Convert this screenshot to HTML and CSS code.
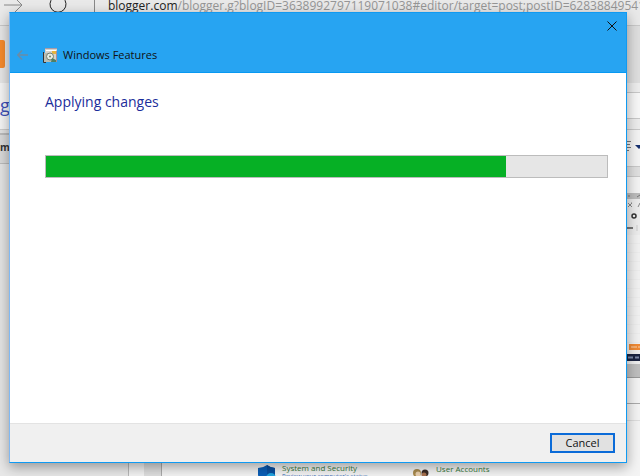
FILE: index.html
```html
<!DOCTYPE html>
<html lang="en">
<head>
<meta charset="utf-8">
<title>Windows Features</title>
<link rel="stylesheet" href="styles.css">
</head>
<body>
<div class="desktop">
  <header class="address-bar">
    <svg class="nav-icon" viewBox="0 0 20 18"><path d="M0 9H17M10 1L18 9L10 17"/></svg>
    <svg class="nav-icon reload" viewBox="0 0 20 18"><path d="M14 2A8 8 0 1 1 4 2"/></svg>
    <span class="divider"></span>
    <span class="url"><b>blogger.com</b>/blogger.g?blogID=3638992797119071038#editor/target=post;postID=6283884954153</span>
  </header>

  <main class="behind">
    <div class="strip left">
      <div class="band compose"><span class="orange"></span></div>
      <div class="band blog-title">g</div>
      <div class="band tools">m</div>
      <div class="band rest"></div>
    </div>
    <div class="strip right">
      <div class="band top"></div>
      <div class="band pale"></div>
      <div class="band field"></div>
      <div class="band gap"></div>
      <div class="band format">
        <svg viewBox="0 0 14 12"><path d="M0 1.500H5M0 4.500H4M0 7.500H5M0 10.500H3" stroke="#777"/><path d="M9 5H17L13 9Z" fill="#17316f"/></svg>
      </div>
      <div class="band ruler"></div>
      <div class="band pale-two"></div>
      <div class="band thumb-bar"><svg viewBox="0 0 14 6"><path d="M2 3H4M11 4L14 2" stroke="#777"/></svg></div>
      <div class="band thumb-tools">
        <svg viewBox="0 0 14 36"><path d="M2 4L6 8M6 4L2 8M5 4H6M12 8L14 4" stroke="#888" fill="none"/><circle cx="8" cy="17" r="2" fill="none" stroke="#333" stroke-width="1.5"/><path d="M0 29H7" stroke="#777" stroke-width="2"/><path d="M11 26V32" stroke="#ccc"/></svg>
      </div>
      <div class="band thumb-page"></div>
      <div class="band thumb-orange"><svg viewBox="0 0 11 6"><path d="M2 3H8M9 3H11" stroke="#fbd3ad"/></svg></div>
      <div class="band thumb-navy"><svg viewBox="0 0 14 7"><path d="M2 3.500H7M9 3.500H13" stroke="#7c8aa8" stroke-width="2"/></svg></div>
      <div class="band thumb-foot"></div>
      <div class="band page-end"></div>
      <div class="band page-line"></div>
      <div class="band page-rest"></div>
    </div>
  </main>

  <footer class="panel">
    <div class="panel-side"></div>
    <div class="panel-gap"></div>
    <div class="panel-edge"></div>
    <div class="panel-body">
      <div class="item">
        <svg class="shield" viewBox="0 0 20 18"><path d="M1 3Q6 3 10 0Q14 3 18 3V10Q17 15 10 19Q2 15 1 10Z" fill="#0b5fb8"/><path d="M10 0Q14 3 18 3V10H10Z" fill="#0a4f9f"/><circle cx="14" cy="13" r="5" fill="#23a5e0"/></svg>
        <div><div class="item-name">System and Security</div><div class="item-link">Review your computer's status</div></div>
      </div>
      <div class="item accounts">
        <svg class="people" viewBox="0 0 16 16"><circle cx="4" cy="5" r="4" fill="#a98b4e"/><circle cx="5" cy="6" r="2.5" fill="#ead0ad"/><circle cx="12" cy="5" r="3.5" fill="#3a2b25"/><circle cx="11" cy="7" r="2.5" fill="#a8714e"/><path d="M0 16Q1 10 5 10Q8 10 8 16Z" fill="#7fae8c"/><path d="M8 16Q9 10 12 10Q15 10 16 16Z" fill="#55799b"/></svg>
        <div class="item-name">User Accounts</div>
      </div>
    </div>
  </footer>

  <section class="dialog" role="dialog" aria-labelledby="dialog-title">
    <header class="dialog-head">
      <div class="close-row">
        <button class="close" aria-label="Close"><svg viewBox="0 0 10 10"><path d="M0.500 0.500L9.500 9.500M9.500 0.500L0.500 9.500"/></svg></button>
      </div>
      <div class="title-row">
        <button class="back" aria-label="Back" disabled><svg viewBox="0 0 12 10"><path d="M11 5H1M5 0.500L0.700 5L5 9.500"/></svg></button>
        <svg class="app-icon" viewBox="0 0 15 15"><path d="M2 0H14V14H2Z" fill="#d6d3cc"/><path d="M2 0.500H14" stroke="#a89aa5"/><path d="M3 2.500H13" stroke="#fff"/><path d="M9 3H13V6H9Z" fill="#e8b53c"/><path d="M0.500 4V14.500H3" fill="none" stroke="#333"/><path d="M1 5H10V14H1Z" fill="#b9bdb4"/><circle cx="7" cy="8.500" r="3.500" fill="#e8eee6" stroke="#76806f"/><circle cx="7" cy="8.500" r="1" fill="#718267"/><path d="M9 10L13 12V14H8Z" fill="#4f8062"/><path d="M13.500 3V14" stroke="#aa8f96"/></svg>
        <h1 id="dialog-title">Windows Features</h1>
      </div>
    </header>
    <div class="dialog-body">
      <h2 id="task">Applying changes</h2>
      <progress aria-labelledby="task" max="100" value="82"></progress>
    </div>
    <footer class="dialog-foot"><button class="cancel">Cancel</button></footer>
  </section>
</div>
</body>
</html>
```
FILE: styles.css
```css
* { box-sizing: border-box; }
body { margin: 0; font-family: "Open Sans", "Noto Sans", sans-serif; }
svg { display: block; }
button { font: inherit; padding: 0; }
.desktop { position: relative; height: 100vh; overflow: hidden; display: flex; flex-direction: column; background: #f3f3f3; }

.address-bar { display: flex; flex: none; height: 26px; padding-left: 4px; background: #e9e9e9; border-bottom: 1px solid #c8c8c8; overflow: hidden; }
.nav-icon { flex: none; width: 20px; height: 18px; margin-top: -4px; fill: none; stroke: #888; }
.reload { margin: -4px 0 0 25px; stroke: #222; overflow: visible; }
.divider { flex: none; width: 1px; height: 14px; margin: 0 13px 0 25px; background: #888; }
.url { font-size: 12px; line-height: 18px; margin-top: -3px; color: #969696; white-space: nowrap; }
.url b { font-weight: 400; color: #222; }

.behind { flex: 1; min-height: 0; display: flex; justify-content: space-between; overflow: hidden; }
.strip { display: flex; flex-direction: column; }
.left { width: 10px; background: #e2e2e2; overflow: hidden; }
.right { width: 14px; background: #eee; overflow: hidden; }
.band { flex: none; overflow: hidden; }
.compose { height: 57px; padding-top: 14px; background: #e6e6e6; }
.orange { display: block; width: 5px; height: 28px; background: #f58a2c; border-radius: 0 2px 2px 0; }
.blog-title { height: 47px; background: #f5f5f5; border-bottom: 1px solid #ccc; color: #3d50b8; font-size: 18px; line-height: 44px; }
.tools { height: 31px; margin-top: 3px; background: #d9d9d9; border: solid #bbb; border-width: 2px 0 1px; color: #333; font-size: 10px; font-weight: 700; line-height: 24px; }
.rest { flex: 1; background: #e4e4e4; }

.top { height: 57px; background: #dedede; }
.pale { height: 10px; background: #ededed; border-bottom: 1px solid #c8c8c8; }
.field { height: 26px; background: #f7f7f7; border-bottom: 1px solid #c8c8c8; }
.gap { height: 11px; background: #ececec; border-bottom: 1px solid #c8c8c8; }
.format { height: 36px; padding-top: 10px; background: #f3f3f3; }
.format svg { width: 14px; height: 12px; }
.ruler { height: 11px; background: #dfdfdf; border: solid #c8c8c8; border-width: 1px 0; }
.pale-two { height: 16px; background: #f3f3f3; }
.thumb-bar { height: 6px; background: #bcbcbc; }
.thumb-bar svg { width: 14px; height: 6px; }
.thumb-tools { height: 36px; background: #ececec; }
.thumb-tools svg { width: 14px; height: 36px; }
.thumb-page { height: 109px; background: repeating-linear-gradient(#f1f1f1 0 8px, #ececec 8px 9px); }
.thumb-orange { height: 6px; margin-left: 3px; background: #f08a34; }
.thumb-orange svg { width: 11px; height: 6px; }
.thumb-navy { height: 7px; margin-top: 4px; background: #1a2340; }
.thumb-navy svg { width: 14px; height: 7px; }
.thumb-foot { height: 14px; margin-top: 3px; background: #bebebe; border-bottom: 1px solid #999; }
.page-end { height: 26px; background: #f3f3f3; border-bottom: 1px solid #aaa; }
.page-line { height: 17px; background: #f3f3f3; border-bottom: 1px solid #ddd; }
.page-rest { flex: 1; background: #f3f3f3; }

.panel { flex: none; display: flex; height: 36px; }
.panel-side { flex: 0 0 129px; background: #e8e8e8; border-right: 1px solid #b8b8b8; }
.panel-gap { flex: 0 0 15px; background: #f3f3f3; }
.panel-edge { flex: 0 0 18px; background: #dedede; border-right: 1px solid #aaa; }
.panel-body { flex: 1; display: flex; gap: 60px; padding: 23px 0 0 95px; background: #f4f4f4; font-size: 8px; line-height: 9px; white-space: nowrap; overflow: hidden; }
.item { display: flex; gap: 5px; flex: none; width: 96px; }
.item-name { color: #397a3d; }
.item-link { color: #356ab5; font-size: 6px; line-height: 8px; }
.shield { flex: none; width: 20px; height: 18px; margin-top: 2px; }
.people { flex: none; width: 16px; height: 16px; margin-top: 4px; }
.accounts { gap: 7px; padding-top: 1px; }

.dialog { position: absolute; inset: 12px 13px 13px 9px; display: flex; flex-direction: column; background: #fff; border: 1px solid #0f9af2; border-left-color: #80b8f2; box-shadow: 0 4px 12px rgba(0,0,0,.36); }
.dialog-head { flex: none; height: 60px; background: #27a4f2; border-bottom: 1px solid #0799f2; }
.close-row { display: flex; justify-content: flex-end; height: 30px; padding: 8px 9px 0 0; }
.close, .back { border: 0; background: none; }
.close { width: 10px; height: 10px; }
.close svg { width: 10px; height: 10px; stroke: #111; }
.title-row { display: flex; align-items: center; height: 24px; padding-left: 7px; }
.back { width: 12px; height: 10px; }
.back svg { width: 12px; height: 10px; fill: none; stroke: #6b8ca6; stroke-width: 1.5; }
.app-icon { width: 15px; height: 15px; margin: 0 5px 0 14px; }
h1 { margin: 0; font-size: 11px; font-weight: 400; line-height: 16px; color: #111; }
.dialog-body { flex: 1; padding: 18px 18px 0 35px; }
h2 { margin: 0 0 42px; font-size: 14px; font-weight: 400; line-height: 22px; color: #1b2d9b; }
progress { display: block; width: 100%; height: 23px; appearance: none; border: 1px solid #bcbcbc; background: #e6e6e6; }
progress::-webkit-progress-bar { background: #e6e6e6; }
progress::-webkit-progress-value { background: #06b025; }
.dialog-foot { flex: none; display: flex; justify-content: flex-end; height: 39px; padding: 9px 11px 0 0; background: #f0f0f0; border-top: 1px solid #e3e3e3; }
.cancel { width: 65px; height: 20px; border: 2px solid #0b6bd8; background: #e1e1e1; color: #111; font-size: 11px; line-height: 16px; }
```
